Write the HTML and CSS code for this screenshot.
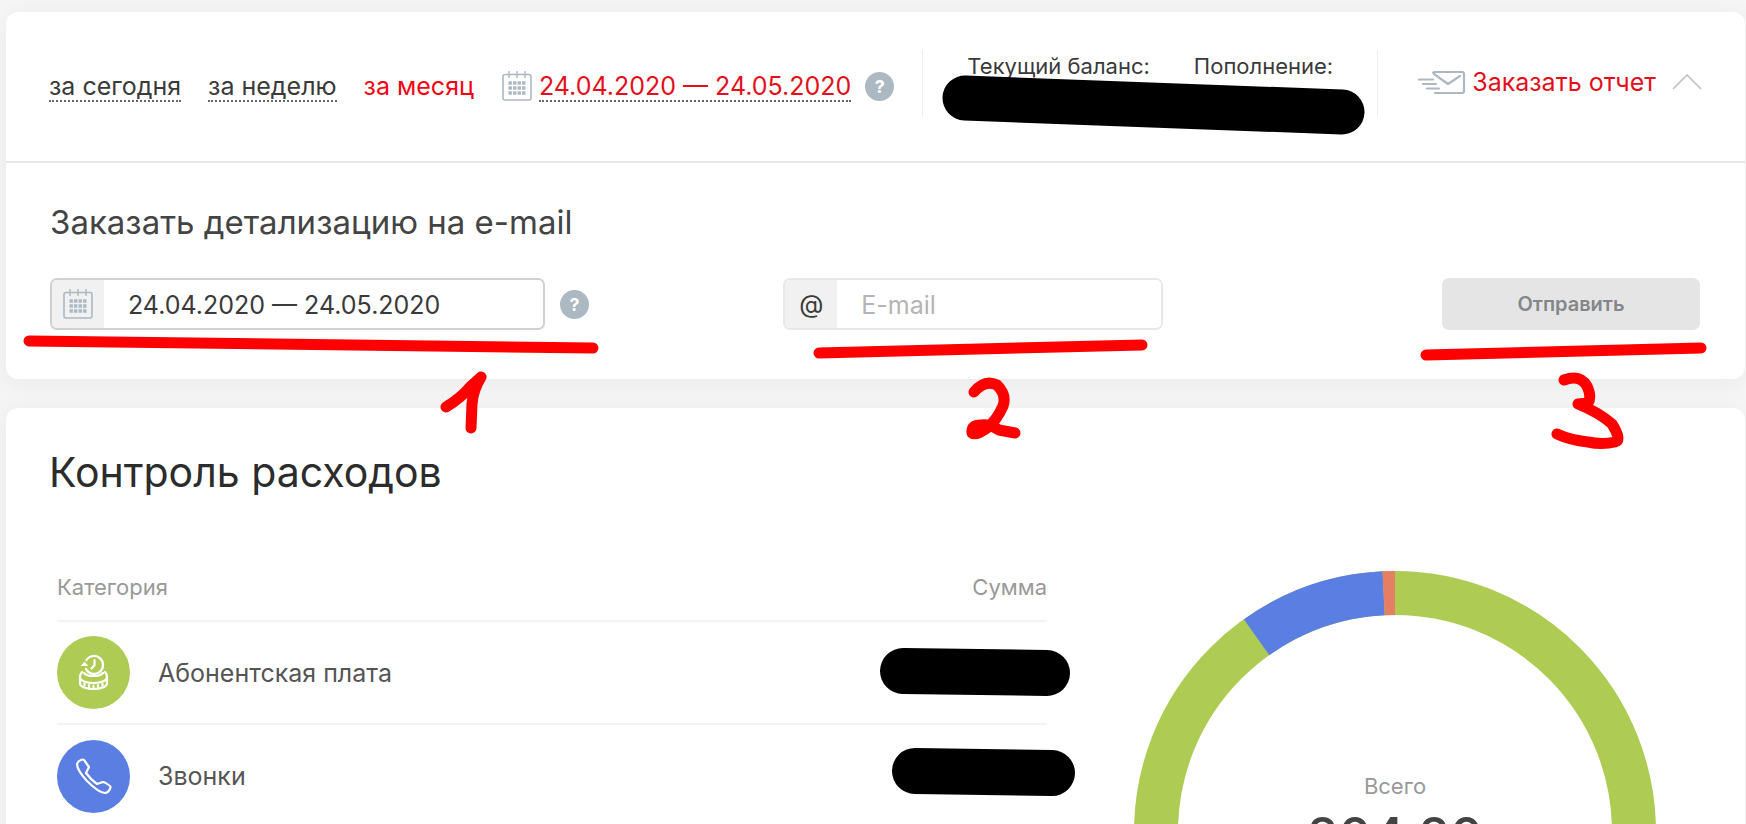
FILE: index.html
```
<!DOCTYPE html>
<html lang="ru">
<head>
    <meta charset="UTF-8">
    <meta name="viewport" content="width=device-width, initial-scale=1.0">
    <title>Контроль расходов</title>
    <link rel="stylesheet" href="styles.css">
</head>
<body>
    <!-- Shared icons -->
    <svg class="sprite" aria-hidden="true">
        <symbol id="calendar" viewBox="0 0 30 30">
            <rect x="1" y="3.500" width="28" height="25.500" rx="2" fill="none" stroke="#acb8c2" stroke-width="1.6"/>
            <path d="M7 0v7M15 0v7M23 0v7" stroke="#acb8c2" stroke-width="1.4"/>
            <path d="M6.500 12h17M6.500 17h17M6.500 22h17" stroke="#acb8c2" stroke-width="3.400" stroke-dasharray="3.400 1.130"/>
        </symbol>
    </svg>

    <main class="page">
        <section class="card">
            <div class="toolbar">
                <nav class="periods">
                    <a href="#" class="period">за сегодня</a>
                    <a href="#" class="period">за неделю</a>
                    <a href="#" class="period active">за месяц</a>
                </nav>
                <div class="range">
                    <svg class="icon"><use href="#calendar"/></svg>
                    <a href="#" class="range-link">24.04.2020 — 24.05.2020</a>
                    <button type="button" class="help">?</button>
                </div>
                <div class="balance">
                    <span>Текущий баланс:</span>
                    <span>Пополнение:</span>
                    <svg class="mark mark-balance" viewBox="0 0 424 62"><path d="M23 24L400 38" stroke="#000" stroke-width="45" stroke-linecap="round"/></svg>
                </div>
                <div class="report">
                    <svg class="icon-mail" viewBox="0 -1 48 24" fill="none" stroke="#acb8c2" stroke-width="2.2" stroke-linecap="round" stroke-linejoin="round">
                        <path d="M17 22h27q2 0 2-2V3q0-2-2-2H17q-3 0-1 2l14 10 12-8M1 8.500h14M5 13h13M9 17.500h12"/>
                    </svg>
                    <a href="#" class="report-link">Заказать отчет</a>
                    <svg class="icon-up" viewBox="0 0 30 16"><path d="M1 15L15 1l14 14" fill="none" stroke="#b9c2ca" stroke-width="1.600"/></svg>
                </div>
            </div>

            <form class="order">
                <h2>Заказать детализацию на e-mail</h2>
                <div class="order-row">
                    <div class="period-field">
                        <label class="field field-dark" for="period">
                            <span class="addon"><svg class="icon"><use href="#calendar"/></svg></span>
                            <input type="text" id="period" value="24.04.2020 — 24.05.2020">
                        </label>
                        <button type="button" class="help">?</button>
                        <svg class="mark mark-one" viewBox="0 0 576 100"><path d="M6 9L570 16M423 75Q438 66 448 54L458 45Q450 58 449 72L448 96"/></svg>
                    </div>
                    <div class="email-field">
                        <label class="field" for="email">
                            <span class="addon">@</span>
                            <input type="email" id="email" placeholder="E-mail">
                        </label>
                        <svg class="mark mark-two" viewBox="0 0 336 100"><path d="M6 14L329 6M161 53Q172 40 184 46Q194 56 190 67Q184 81 174 89Q163 97 159 94Q158 85 169 86Q176 85 186 91L202 94"/></svg>
                    </div>
                    <div class="send-field">
                        <button type="submit" class="send">Отправить</button>
                        <svg class="mark mark-three" viewBox="0 0 288 100"><path d="M6 14L281 7M144 39Q160 33 167 45Q172 56 168 62L158 63Q180 72 192 83Q202 99 195 101Q182 104 168 101Q150 99 137 93"/></svg>
                    </div>
                </div>
            </form>
        </section>

        <section class="card expenses">
            <h1>Контроль расходов</h1>
            <div class="expenses-body">
                <table class="costs">
                    <thead>
                        <tr><th>Категория</th><th class="sum">Сумма</th></tr>
                    </thead>
                    <tbody>
                        <tr>
                            <td>
                                <div class="category">
                                    <svg class="badge" viewBox="0 0 73 73" fill="none" stroke="#fff" stroke-width="2.200" stroke-linecap="round">
                                        <circle cx="36.500" cy="36.500" r="36.500" fill="#aecb54" stroke="none"/>
                                        <path d="M29.500 24A9 9 0 1 1 29 33M37.500 24v5l-3 3.500"/>
                                        <path d="M25 29.500h5l-2.500-3z" fill="#fff" stroke-width="1.200"/>
                                        <path d="M25 36q-2 2-2 5c0 8 27 8 27 0q0-3-2-5M23 41v6c0 8 27 8 27 0v-6M27 37c3 4 16 4 19 0"/>
                                        <path d="M27.500 47.500v2M32 49v2M36.500 49.500v2M41 49v2M45.500 47.500v2"/>
                                    </svg>
                                    <span>Абонентская плата</span>
                                </div>
                            </td>
                            <td class="sum"><svg class="mark mark-sum" viewBox="0 0 190 48"><path d="M23 23L167 25" stroke="#000" stroke-width="46" stroke-linecap="round"/></svg></td>
                        </tr>
                        <tr>
                            <td>
                                <div class="category">
                                    <svg class="badge" viewBox="0 0 73 73" fill="none" stroke="#fff" stroke-width="2.200" stroke-linejoin="round">
                                        <circle cx="36.500" cy="36.500" r="36.500" fill="#5a7ee2" stroke="none"/>
                                        <path d="M20 24q1-3 4-4 2-1 3 0l5 7-3 6q5 7 11 11l6-2q2 0 7 4 1 1 0 3-2 4-5 4Q42 53 30 41Q20 30 20 24z"/>
                                    </svg>
                                    <span>Звонки</span>
                                </div>
                            </td>
                            <td class="sum"><svg class="mark mark-sum second" viewBox="0 0 190 48"><path d="M30 23L167 25" stroke="#000" stroke-width="46" stroke-linecap="round"/></svg></td>
                        </tr>
                    </tbody>
                </table>
                <div class="chart">
                    <svg viewBox="0 0 522 522" fill="none" stroke-width="44">
                        <circle cx="261" cy="261" r="239" stroke="#aecb54"/>
                        <path d="M122.600 66.200A239 239 0 0 1 249.600 22.300" stroke="#5a7ee2"/>
                        <path d="M249.600 22.300A239 239 0 0 1 261 22" stroke="#e67e64"/>
                    </svg>
                    <div class="total">
                        <span>Всего</span>
                        <strong>204.20</strong>
                    </div>
                </div>
            </div>
        </section>
    </main>
</body>
</html>
```
FILE: styles.css
```
* {
    margin: 0;
    padding: 0;
    box-sizing: border-box;
}

body {
    font-family: Inter, 'Liberation Sans', sans-serif;
    background-color: #f5f5f5;
    color: #3a3a3a;
    font-size: 25px;
    line-height: 32px;
    height: 100vh;
    overflow: hidden;
}

a {
    color: inherit;
    text-decoration: none;
}

.sprite {
    position: absolute;
    width: 0;
    height: 0;
}

.page {
    padding: 12px 1px 0 6px;
}

.card {
    background-color: #fff;
    border-radius: 12px;
    box-shadow: 0 4px 24px rgba(0,0,0,0.05);
    margin-bottom: 29px;
}

/* Toolbar */
.toolbar {
    display: flex;
    align-items: flex-start;
    height: 151px;
    padding: 38px 43px 0;
    border-bottom: 2px solid #e6e6e6;
}

.periods {
    display: flex;
    gap: 27px;
    padding-top: 22px;
    line-height: 28px;
}

.period, .range-link {
    border-bottom: 2px dotted #666;
    line-height: 28px;
}

.active {
    color: #f00514;
    border-bottom: none;
}

.range {
    display: flex;
    align-items: center;
    padding: 20px 28px 0 28px;
}

.range-link {
    color: #e3101c;
    margin: 2px 14px 0 7px;
}

.icon {
    display: block;
    width: 30px;
    height: 30px;
}

.help {
    width: 29px;
    height: 29px;
    border: none;
    border-radius: 50%;
    background-color: #acb8c2;
    color: #fff;
    font: bold 18px/29px Inter, sans-serif;
}

.balance {
    position: relative;
    display: flex;
    gap: 44px;
    height: 67px;
    padding: 0 44px;
    border-left: 1px solid #eee;
    border-right: 1px solid #eee;
    font-size: 22px;
}

.report {
    display: flex;
    align-items: center;
    margin-left: auto;
    padding-top: 16px;
    color: #e3101c;
}

.icon-mail {
    width: 48px;
    height: 24px;
    margin-right: 6px;
}

.icon-up {
    width: 30px;
    height: 16px;
    margin-left: 16px;
}

/* Order form */
.order {
    padding: 37px 45px 49px 44px;
}

h1, h2, th {
    font-weight: normal;
}

h2 {
    font-size: 33px;
    line-height: 44px;
    color: #444;
    margin-bottom: 34px;
}

.order-row {
    display: grid;
    grid-template-columns: 4fr 3fr 2fr;
}

.period-field, .email-field, .send-field {
    position: relative;
    display: flex;
    align-items: center;
    gap: 15px;
}

.send-field {
    justify-self: end;
}

.field {
    display: flex;
    width: 380px;
    height: 52px;
    border: 2px solid #e8e8e8;
    border-radius: 7px;
    overflow: hidden;
}

.field-dark {
    width: 495px;
    border-color: #d0d0d0;
}

.addon {
    display: flex;
    align-items: center;
    justify-content: center;
    width: 52px;
    background-color: #f1f1f1;
}

input {
    flex: 1;
    min-width: 0;
    padding: 2px 0 0 24px;
    border: none;
    outline: none;
    font: inherit;
    color: #3a3a3a;
}

input::placeholder {
    color: #b4b4b4;
}

.send {
    width: 258px;
    height: 52px;
    border: none;
    border-radius: 7px;
    background-color: #e5e5e5;
    color: #83878b;
    font: 600 20px/28px Inter, sans-serif;
}

/* Expenses */
.expenses {
    padding: 36px 89px 0 43px;
}

h1 {
    font-size: 41px;
    line-height: 56px;
    color: #2c2c2c;
}

.expenses-body {
    display: flex;
    justify-content: space-between;
    align-items: flex-start;
    padding: 71px 0 0 8px;
}

.costs {
    width: 990px;
    border-collapse: collapse;
    color: #555;
}

.costs th {
    height: 49px;
    padding-bottom: 17px;
    text-align: left;
    font-size: 22px;
    color: #999;
}

.costs .sum {
    position: relative;
    text-align: right;
}

.costs td {
    height: 103px;
    border-top: 2px solid #f3f3f3;
}

.category {
    display: flex;
    align-items: center;
    gap: 28px;
}

.badge {
    width: 73px;
    height: 73px;
}

.chart {
    position: relative;
    width: 522px;
}

.chart svg {
    display: block;
}

.total {
    position: absolute;
    top: 199px;
    left: 0;
    width: 100%;
    text-align: center;
    font-size: 22px;
    color: #999;
}

.total strong {
    display: block;
    font-size: 51px;
    line-height: 68px;
    font-weight: 500;
    color: #444;
}

/* Marker strokes drawn over the page */
.mark {
    position: absolute;
    overflow: visible;
    pointer-events: none;
    fill: none;
    stroke: #f00;
    stroke-width: 11;
    stroke-linecap: round;
    stroke-linejoin: round;
}

.mark-balance {
    top: 24px;
    left: 19px;
    width: 424px;
}

.mark-one {
    top: 54px;
    left: -27px;
    width: 576px;
}

.mark-two {
    top: 61px;
    left: 30px;
    width: 336px;
}

.mark-three {
    top: 63px;
    left: -22px;
    width: 288px;
}

.mark-sum {
    top: 26px;
    right: -23px;
    width: 190px;
}

.second {
    right: -28px;
    top: 23px;
}
```
